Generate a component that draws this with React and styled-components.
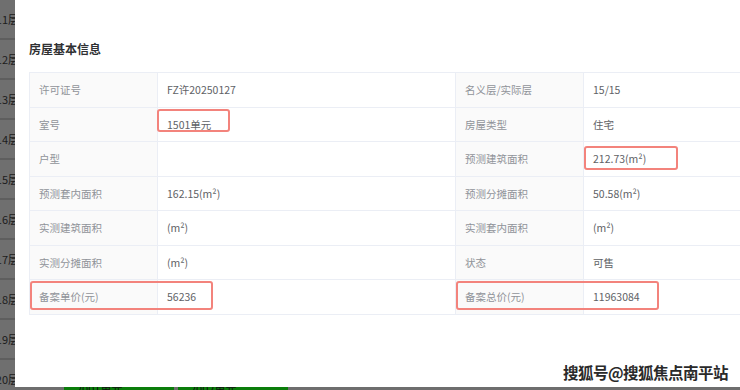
import styled, { createGlobalStyle } from 'styled-components';

const GlobalStyle = createGlobalStyle`
    html, body {
        margin: 0;
        padding: 0;
        width: 740px;
        height: 390px;
        overflow: hidden;
        background: #6e6e6e;
        font-family: "Noto Sans CJK SC", "Noto Sans", sans-serif;
    }
`

const floors = ['11层', '12层', '13层', '14层', '15层', '16层', '17层', '18层', '19层', '20层'];

const rows = [
    ['许可证号', 'FZ许20250127', '名义层/实际层', '15/15'],
    ['室号', '1501单元', '房屋类型', '住宅'],
    ['户型', '', '预测建筑面积', '212.73(m²)'],
    ['预测套内面积', '162.15(m²)', '预测分摊面积', '50.58(m²)'],
    ['实测建筑面积', '(m²)', '实测套内面积', '(m²)'],
    ['实测分摊面积', '(m²)', '状态', '可售'],
    ['备案单价(元)', '56236', '备案总价(元)', '11963084'],
];

// red annotation boxes drawn over the table
const marks = [
    { left: 128, top: 37, width: 73, height: 23 },
    { left: 555, top: 74, width: 94, height: 24 },
    { left: 1, top: 209, width: 183, height: 29 },
    { left: 427, top: 209, width: 203, height: 29 },
];

const App = () => {
    return (
        <>
            <GlobalStyle />
            <Screen>
                <FloorStrip>
                    {floors.map((f) => (
                        <FloorCell key={f}><span>{f}</span></FloorCell>
                    ))}
                </FloorStrip>
                <Main>
                    <Modal>
                        <Title>房屋基本信息</Title>
                        <TableWrap>
                            <InfoTable>
                                {rows.map((r, idx) => (
                                    <Row key={idx}>
                                        <Cell $label>{r[0]}</Cell>
                                        <Cell>{r[1]}</Cell>
                                        <Cell $label>{r[2]}</Cell>
                                        <Cell>{r[3]}</Cell>
                                    </Row>
                                ))}
                            </InfoTable>
                            {marks.map((m, idx) => (
                                <Mark key={idx} style={{ left: m.left, top: m.top, width: m.width, height: m.height }} />
                            ))}
                        </TableWrap>
                        <Watermark>搜狐号@搜狐焦点南平站</Watermark>
                    </Modal>
                    <UnitStrip>
                        <UnitCell>2001单元</UnitCell>
                        <UnitCell>2002单元</UnitCell>
                    </UnitStrip>
                </Main>
            </Screen>
        </>
    );
}

const Screen = styled.div`
    display: flex;
    width: 740px;
    height: 390px;
    overflow: hidden;
`

const FloorStrip = styled.div`
    width: 15px;
    flex-shrink: 0;
    display: flex;
    flex-direction: column;
    overflow: hidden;
    background: #6f6f6f;
`

const FloorCell = styled.div`
    height: 40px;
    flex-shrink: 0;
    box-sizing: border-box;
    border-bottom: 2px solid #5e5e5e;
    display: flex;
    align-items: center;
    justify-content: flex-end;

    span {
        margin-right: -4px;
        font-size: 11px;
        color: #1c1c1c;
        white-space: nowrap;
    }
`

const Main = styled.div`
    flex: 1;
    display: flex;
    flex-direction: column;
    min-width: 0;
`

const Modal = styled.div`
    position: relative;
    height: 387px;
    flex-shrink: 0;
    background: #ffffff;
    padding: 40px 0 0 14px;
    box-sizing: border-box;
    overflow: hidden;
`

const Title = styled.div`
    font-size: 12px;
    font-weight: bold;
    color: #303133;
    line-height: 17px;
    margin-bottom: 15px;
`

const TableWrap = styled.div`
    position: relative;
`

const InfoTable = styled.div`
    display: grid;
    grid-template-columns: 128px 298px 128px 1fr;
    border-top: 1px solid #ebeef5;
    border-left: 1px solid #ebeef5;
    margin-right: -40px;
`

const Row = styled.div`
    display: contents;
`

const Cell = styled.div`
    height: 34.5px;
    box-sizing: border-box;
    border-right: 1px solid #ebeef5;
    border-bottom: 1px solid #ebeef5;
    padding: 0 9px;
    display: flex;
    align-items: center;
    font-size: 10.5px;
    background: ${(p) => (p.$label ? '#fafafa' : '#ffffff')};
    color: ${(p) => (p.$label ? '#909399' : '#606266')};
    white-space: nowrap;
`

const Mark = styled.div`
    position: absolute;
    box-sizing: border-box;
    border: 2px solid #f3837c;
    border-radius: 3px;
    pointer-events: none;
`

const Watermark = styled.div`
    position: absolute;
    right: 12px;
    bottom: 4px;
    font-size: 15.5px;
    font-weight: bold;
    color: #2a2a2a;
    letter-spacing: -0.5px;
    text-shadow: 1px 1px 0 #fff, -1px -1px 0 #fff, 1px -1px 0 #fff, -1px 1px 0 #fff;
`

const UnitStrip = styled.div`
    flex: 1;
    display: flex;
    gap: 4px;
    padding-left: 49px;
    background: #6e6e6e;
    overflow: hidden;
`

const UnitCell = styled.div`
    width: 110px;
    background: #0a7d0a;
    color: #111;
    font-size: 11px;
    line-height: 3px;
    padding-left: 12px;
    box-sizing: border-box;
    overflow: hidden;
`

export default App;
